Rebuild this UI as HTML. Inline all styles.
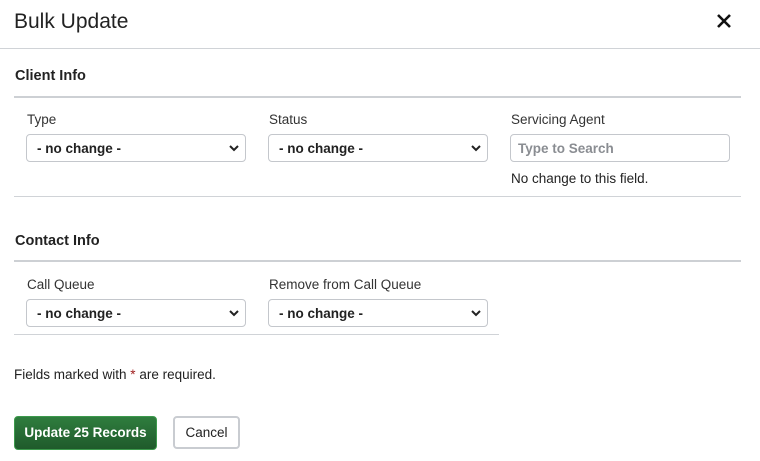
<!DOCTYPE html>
<html><head><style>
*{box-sizing:border-box;margin:0;padding:0}
body{width:760px;height:461px;background:#fff;font-family:"Liberation Sans",sans-serif;color:#222;position:relative;overflow:hidden}
.a{position:absolute;white-space:nowrap}
.sel{position:absolute;height:28px;width:220px;border:1px solid #c4c7cc;border-radius:4px;background:#fff;font-size:13.5px;color:#222;padding:6px 10px;font-weight:bold}
.sel svg{position:absolute;right:6px;top:9px}
.lbl{font-size:13.5px;color:#333}
.h{font-size:14.5px;font-weight:bold;color:#222}
</style></head><body>
<div class="a" style="left:14px;top:10px;font-size:21px;color:#222">Bulk Update</div>
<svg class="a" style="left:716px;top:13px" width="16" height="16" viewBox="0 0 16 16"><path d="M2 2L14 14M14 2L2 14" stroke="#111" stroke-width="2.6"/></svg>
<div class="a" style="left:0;top:48px;width:760px;height:1px;background:#d0d3d7"></div>

<div class="a h" style="left:15px;top:68px">Client Info</div>
<div class="a" style="left:14px;top:96px;width:727px;height:2px;background:#cdd0d4"></div>
<div class="a lbl" style="left:27px;top:112px">Type</div>
<div class="a lbl" style="left:269px;top:112px">Status</div>
<div class="a lbl" style="left:511px;top:112px">Servicing Agent</div>
<div class="sel" style="left:26px;top:134px">- no change -<svg width="10" height="8" viewBox="0 0 10 8"><path d="M1 2L5 6L9 2" stroke="#222" stroke-width="2" fill="none"/></svg></div>
<div class="sel" style="left:268px;top:134px">- no change -<svg width="10" height="8" viewBox="0 0 10 8"><path d="M1 2L5 6L9 2" stroke="#222" stroke-width="2" fill="none"/></svg></div>
<div class="sel" style="left:510px;top:134px;color:#8a8d92;padding-left:7px">Type to Search</div>
<div class="a lbl" style="left:511px;top:171px;color:#222">No change to this field.</div>
<div class="a" style="left:14px;top:196px;width:727px;height:1px;background:#d0d3d7"></div>

<div class="a h" style="left:15px;top:233px">Contact Info</div>
<div class="a" style="left:14px;top:260px;width:727px;height:2px;background:#cdd0d4"></div>
<div class="a lbl" style="left:27px;top:277px">Call Queue</div>
<div class="a lbl" style="left:269px;top:277px">Remove from Call Queue</div>
<div class="sel" style="left:26px;top:299px">- no change -<svg width="10" height="8" viewBox="0 0 10 8"><path d="M1 2L5 6L9 2" stroke="#222" stroke-width="2" fill="none"/></svg></div>
<div class="sel" style="left:268px;top:299px">- no change -<svg width="10" height="8" viewBox="0 0 10 8"><path d="M1 2L5 6L9 2" stroke="#222" stroke-width="2" fill="none"/></svg></div>
<div class="a" style="left:14px;top:334px;width:485px;height:1px;background:#d0d3d7"></div>

<div class="a" style="left:14px;top:367px;font-size:13.5px;color:#222">Fields marked with <span style="color:#a02020">*</span> are required.</div>

<div class="a" style="left:14px;top:416px;width:143px;height:34px;border-radius:4px;background:linear-gradient(#2f7d3e,#1f5a2b);border:1px solid #3c9a4c;color:#fff;font-size:13.5px;font-weight:bold;text-align:center;line-height:32px">Update 25 Records</div>
<div class="a" style="left:173px;top:416px;width:67px;height:33px;border-radius:4px;border:2px solid #c9ccd1;background:#fff;color:#222;font-size:13.5px;text-align:center;line-height:29px">Cancel</div>
</body></html>
